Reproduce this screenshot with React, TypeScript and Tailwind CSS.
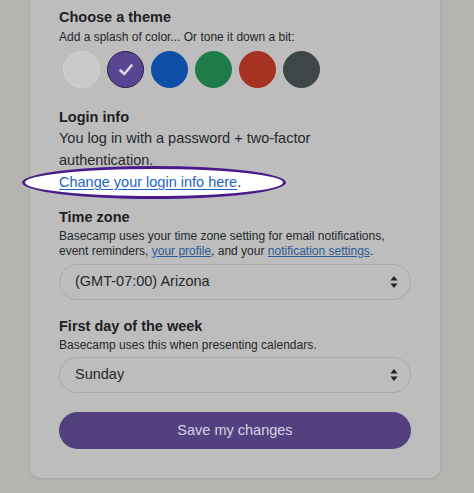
import React from "react";

const swatches = [
  { id: "white", fill: "bg-[#c9c9c9]", ring: "border-[#d3d3d3]" },
  { id: "purple", fill: "bg-[#5a4592]", ring: "border-[#2a2140]", selected: true },
  { id: "blue", fill: "bg-[#0f4ea6]", ring: "border-[#0f4ea6]" },
  { id: "green", fill: "bg-[#1d7c47]", ring: "border-[#1d7c47]" },
  { id: "red", fill: "bg-[#a63222]", ring: "border-[#a63222]" },
  { id: "dark", fill: "bg-[#3f4648]", ring: "border-[#3f4648]" },
];

function Chevrons() {
  return (
    <svg width="10" height="16" viewBox="0 0 10 16" className="shrink-0">
      <path d="M5 2 L8.6 6.4 L1.4 6.4 Z" fill="#1f2326" />
      <path d="M5 14 L8.6 9.6 L1.4 9.6 Z" fill="#1f2326" />
    </svg>
  );
}

function FakeSelect({ value }: { value: string }) {
  return (
    <div className="flex h-[36px] items-center justify-between rounded-full border border-[#a9a9a9] pl-[15px] pr-[11px] text-[14.5px] text-[#24282b]">
      <span>{value}</span>
      <Chevrons />
    </div>
  );
}

export default function App() {
  return (
    <div
      className="h-[493px] w-[474px] overflow-hidden bg-[#b6b4b1]"
      style={{ fontFamily: "'Liberation Sans', Arial, sans-serif" }}
    >
      <div className="ml-[30px] w-[410px] rounded-b-[10px] bg-[#bdbdbd] px-[29px] pb-[29px] pt-[7px] shadow-[0_1px_3px_rgba(0,0,0,0.12)]">
        <h2 className="text-[14.5px] font-bold leading-[20px] text-[#1d2024]">Choose a theme</h2>
        <p className="mt-[2px] text-[12px] leading-[16px] text-[#24282b]">
          Add a splash of color... Or tone it down a bit:
        </p>
        <div className="mt-[6px] flex gap-[7px] pl-[4px]">
          {swatches.map((s) => (
            <div
              key={s.id}
              className={`flex h-[37px] w-[37px] items-center justify-center rounded-full border ${s.fill} ${s.ring}`}
            >
              {s.selected && (
                <svg width="16" height="14" viewBox="0 0 16 14">
                  <path
                    d="M2.5 7.5 L6.3 11 L13.5 2.5"
                    fill="none"
                    stroke="#dcd6ea"
                    strokeWidth="2.6"
                    strokeLinecap="round"
                    strokeLinejoin="round"
                  />
                </svg>
              )}
            </div>
          ))}
        </div>

        <h2 className="mt-[19px] text-[14.5px] font-bold leading-[20px] text-[#1d2024]">Login info</h2>
        <p className="max-w-[290px] text-[14.5px] leading-[22px] text-[#24282b]">
          You log in with a password + two-factor authentication.
        </p>
        <div className="relative">
          <div className="absolute left-[-37px] top-[-5px] h-[33px] w-[264px] rounded-[50%] border-[3px] border-[#4a1a8b] bg-white" />
          <p className="relative text-[14.5px] leading-[22px] text-[#222]">
            <a className="text-[#1f63c6] underline underline-offset-2">Change your login info here</a>.
          </p>
        </div>

        <h2 className="mt-[14px] text-[14.5px] font-bold leading-[20px] text-[#1d2024]">Time zone</h2>
        <p className="mt-[2px] text-[12px] leading-[15px] text-[#24282b]">
          Basecamp uses your time zone setting for email notifications, event reminders,{" "}
          <a className="text-[#2b5a94] underline">your profile</a>, and your{" "}
          <a className="text-[#2b5a94] underline">notification settings</a>.
        </p>
        <div className="mt-[5px]">
          <FakeSelect value="(GMT-07:00) Arizona" />
        </div>

        <h2 className="mt-[16px] text-[14.5px] font-bold leading-[20px] text-[#1d2024]">First day of the week</h2>
        <p className="mt-[2px] text-[12px] leading-[15px] text-[#24282b]">Basecamp uses this when presenting calendars.</p>
        <div className="mt-[4px]">
          <FakeSelect value="Sunday" />
        </div>

        <button className="mt-[19px] h-[37px] w-full rounded-full bg-[#53417f] text-[14.5px] text-[#d6d2e2]">
          Save my changes
        </button>
      </div>
    </div>
  );
}
